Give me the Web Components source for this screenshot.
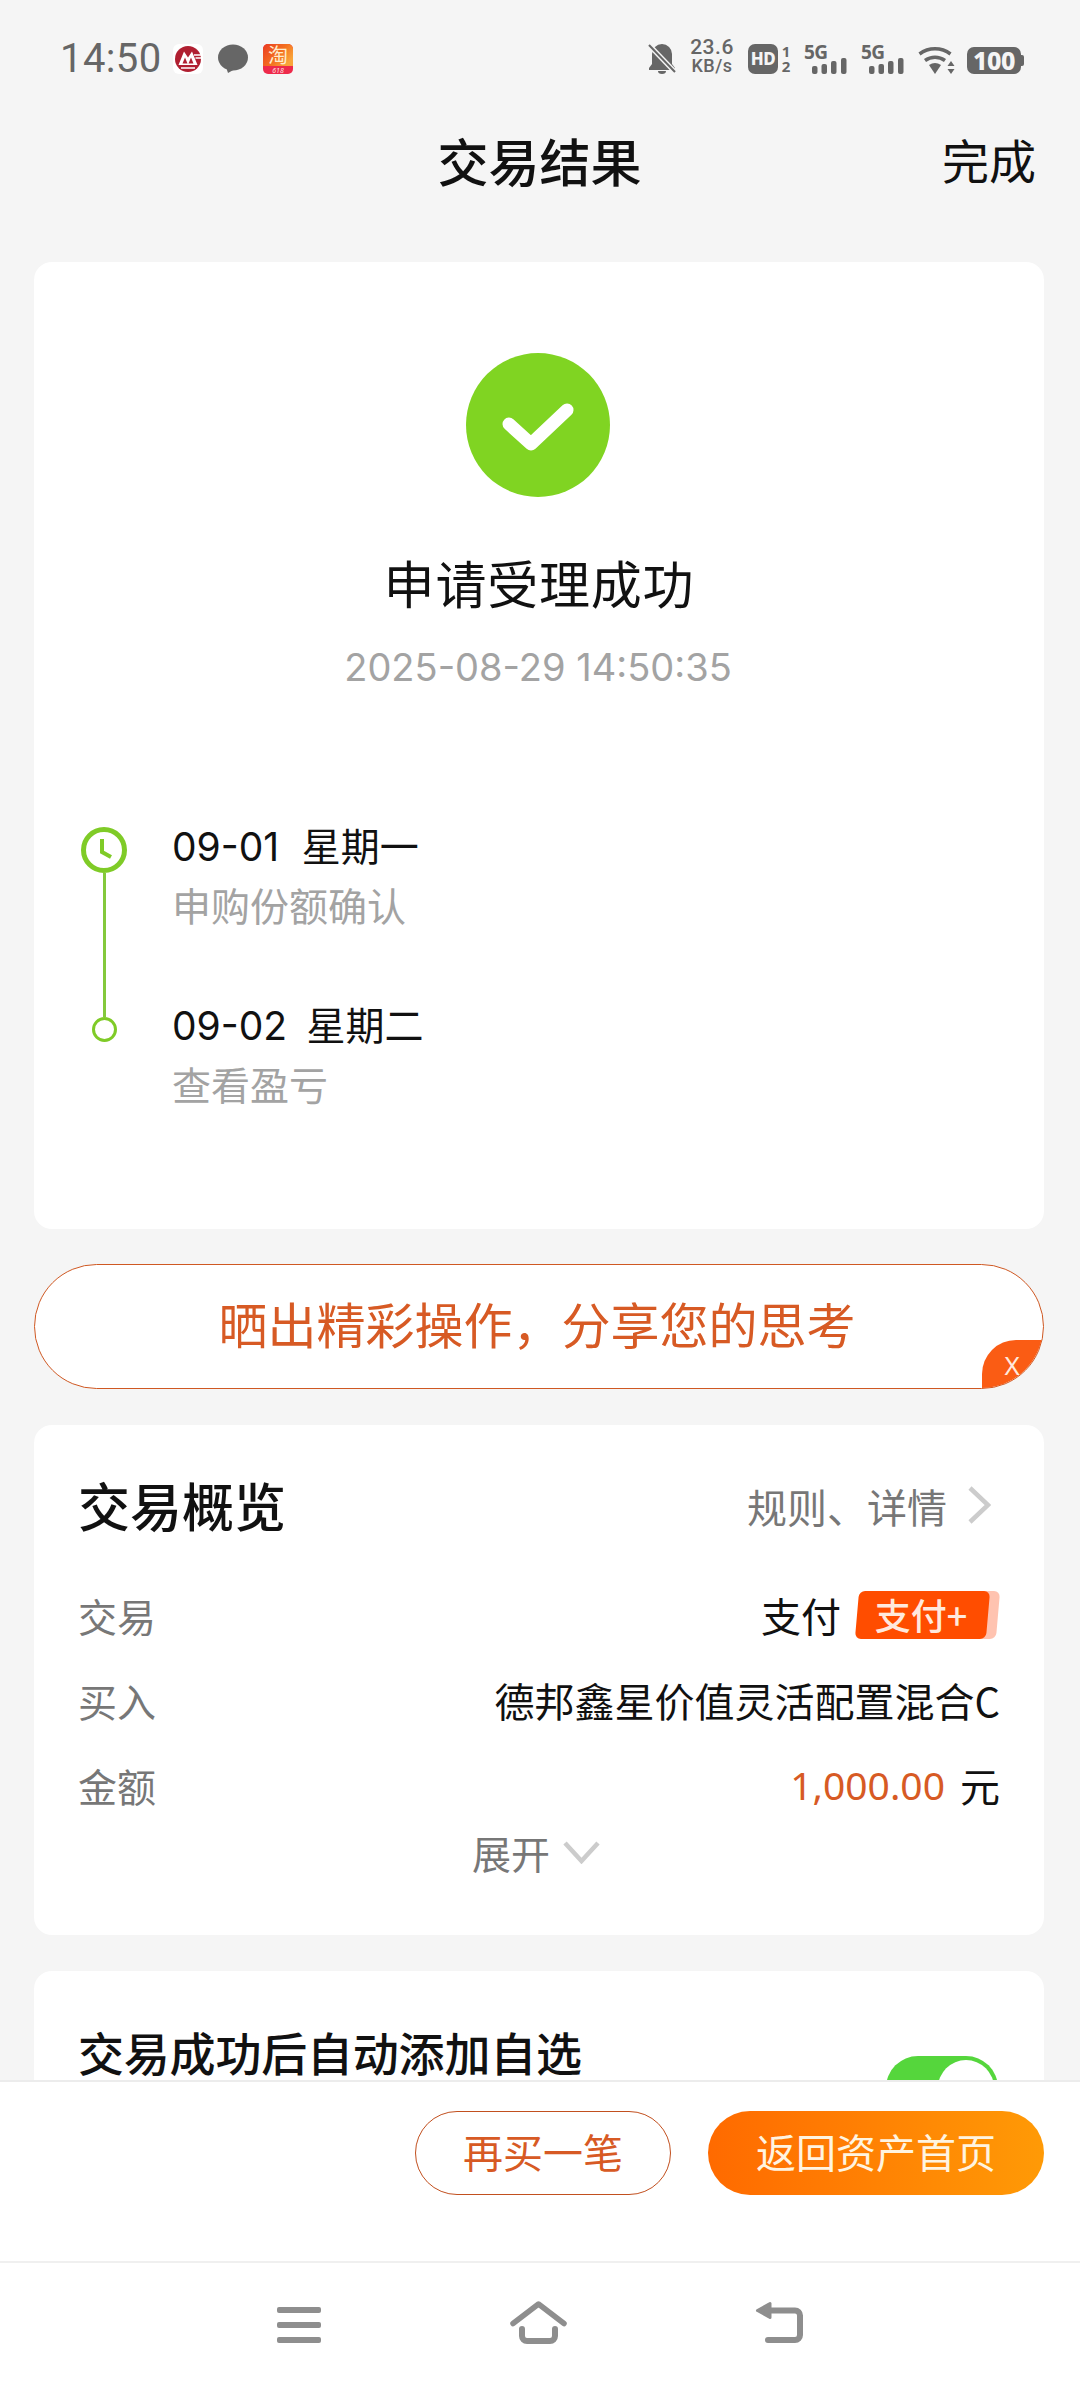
<!DOCTYPE html>
<html lang="zh">
<head>
<meta charset="utf-8">
<title>交易结果</title>
<style>
  html, body { margin: 0; padding: 0; background: #f5f5f5; }
  body { font-family: "Noto Sans CJK SC", "Noto Sans", sans-serif; color: #111; }
</style>
</head>
<body>
<result-page>
  <status-bar slot="top"></status-bar>
  <nav-header slot="top">交易结果<span slot="action">完成</span></nav-header>

  <result-card>
    <span slot="title">申请受理成功</span>
    <span slot="time">2025-08-29 14:50:35</span>
    <timeline-step kind="clock"><span slot="date"><num-text>09-01</num-text>&nbsp; 星期一</span>申购份额确认</timeline-step>
    <timeline-step kind="dot"><span slot="date"><num-text class="tight">09-02</num-text>&nbsp; 星期二</span>查看盈亏</timeline-step>
  </result-card>

  <share-banner>晒出精彩操作&#65292;分享您的思考</share-banner>

  <overview-card>
    <span slot="title">交易概览</span>
    <span slot="link">规则、详情</span>
    <overview-row label="交易">支付<pay-tag>支付+</pay-tag></overview-row>
    <overview-row label="买入">德邦鑫星价值灵活配置混合C</overview-row>
    <overview-row label="金额"><money-text>1,000.00</money-text>元</overview-row>
  </overview-card>

  <auto-card>交易成功后自动添加自选</auto-card>

  <action-bar slot="bottom"></action-bar>
  <system-nav slot="bottom"></system-nav>
</result-page>

<script>
// every element is the same shape: markup + styles in an open shadow root
function component(name, html) {
  const template = document.createElement('template');
  template.innerHTML = html;
  class Element extends HTMLElement {
    constructor() {
      super();
      this.attachShadow({ mode: 'open' });
      this.shadowRoot.appendChild(template.content.cloneNode(true));
    }
  }
  customElements.define(name, Element);
  return Element;
}

component('result-page', `
  <style>
    :host { display: flex; flex-direction: column; width: 1080px; height: 2388px; overflow: hidden; background: #f5f5f5; }
    .main { flex: 1; min-height: 0; overflow: hidden; padding: 0 36px 0 34px; display: flex; flex-direction: column; }
  </style>
  <slot name="top"></slot>
  <div class="main"><slot></slot></div>
  <slot name="bottom"></slot>
`);

component('num-text', `
  <style>
    :host { display: inline-block; margin-right: 5px; font: 400 39px/50px Inter, "Noto Sans", sans-serif; }
    :host(.tight) { margin-right: 2px; }
  </style>
  <slot></slot>
`);

component('status-bar', `
  <style>
    :host { display: flex; flex: none; box-sizing: border-box; height: 115px; padding: 44px 56px 0 60px; color: #666; justify-content: space-between; align-items: flex-start; }
    .side { display: flex; align-items: flex-start; }
    .time { font: 400 40px/30px Roboto, sans-serif; width: 113px; letter-spacing: .4px; }
    svg { display: block; }
    .speed { width: 46px; margin: -5px 13px 0 13px; text-align: center; font: 500 21px/17px Roboto, sans-serif; letter-spacing: .5px; }
    .speed div + div { font-size: 18px; line-height: 17px; margin-top: 1px; }
    .hd { width: 30px; height: 30px; border-radius: 7px; background: #666; color: #f5f5f5; font: 800 17px/30px "Noto Sans", sans-serif; text-align: center; letter-spacing: -.5px; }
    .sim { width: 12px; margin: 0 12px 0 2px; font: 700 15px/15px "Noto Sans", sans-serif; text-align: center; white-space: pre-line; }
    .net { position: relative; width: 43px; height: 30px; margin-right: 14px; }
    .net span { position: absolute; left: 0; top: 0; font: 700 19px/16px "Noto Sans", sans-serif; letter-spacing: -.5px; }
    .net svg { position: absolute; left: 8px; bottom: 0; }
    .wifi { margin: 2px 12px 0 0; }
    .batt { display: flex; align-items: center; margin-top: 3px; }
    .batt div { width: 54px; height: 27px; border-radius: 7px; background: #666; color: #f5f5f5; font: 800 25px/27px "Noto Sans", sans-serif; text-align: center; letter-spacing: -.5px; }
    .batt i { display: block; width: 3px; height: 11px; background: #666; border-radius: 0 2px 2px 0; }
  </style>
  <div class="side">
    <div class="time">14:50</div>
    <svg width="30" height="30" viewBox="0 0 30 30" style="margin-right:15px"><rect width="30" height="30" rx="6" fill="#fff"/><circle cx="15" cy="15" r="13" fill="#b01f31"/><path fill-rule="evenodd" d="M5.500 21 11 7.500l4 6 4-6L24.500 21zM9.500 19.500h5l-2.500-6zM15.500 19.500h5l-2.500-6z" fill="#fff"/><path d="M8 24h14M21 11h8M22.500 14h6.500" stroke="#fff" stroke-width="1.600"/></svg>
    <svg width="30" height="30" viewBox="0 0 30 30" style="margin-right:15px"><ellipse cx="15" cy="13.500" rx="15" ry="13" fill="#666"/><path d="M8 23l2 6 7-4z" fill="#666"/></svg>
    <svg width="30" height="30" viewBox="0 0 30 30" overflow="visible"><defs><linearGradient id="tb" x1="0" y1="0" x2="1" y2=".6"><stop offset="0" stop-color="#ea3a22"/><stop offset=".6" stop-color="#f4701f"/><stop offset="1" stop-color="#f9a53a"/></linearGradient></defs><rect width="30" height="30" rx="5" fill="#ee2a4b"/><path d="M0 22V5a5 5 0 0 1 5-5h20a5 5 0 0 1 5 5v17z" fill="url(#tb)"/><text x="15" y="19" text-anchor="middle" font-size="20" fill="#ffeccd" font-family="Noto Sans CJK SC">淘</text><text x="15" y="28.500" text-anchor="middle" font-size="7" font-style="italic" fill="#ffe0e0" font-family="Noto Sans">618</text></svg>
  </div>
  <div class="side">
    <svg width="28" height="30" viewBox="0 0 28 30"><path d="M4 10a10 10 0 0 1 20 0v10l3 4v2H1v-2l3-4z" fill="#666"/><path d="M10 27a4 3 0 0 0 8 0z" fill="#666"/><path d="M1 1l26 27" stroke="#f5f5f5" stroke-width="5"/><path d="M1 1l26 27" stroke="#666" stroke-width="2"/></svg>
    <div class="speed"><div>23.6</div><div>KB/s</div></div>
    <div class="hd">HD</div>
    <div class="sim">1
2</div>
    <div class="net"><span>5G</span><svg width="35" height="16" viewBox="0 0 35 16"><g fill="#666"><rect y="8" width="5.500" height="8" rx="2"/><rect x="9.500" y="6" width="5.500" height="10" rx="2"/><rect x="19" y="3" width="5.500" height="13" rx="2"/><rect x="29" width="5.500" height="16" rx="2"/></g></svg></div>
    <div class="net"><span>5G</span><svg width="35" height="16" viewBox="0 0 35 16"><g fill="#666"><rect y="8" width="5.500" height="8" rx="2"/><rect x="9.500" y="6" width="5.500" height="10" rx="2"/><rect x="19" y="3" width="5.500" height="13" rx="2"/><rect x="29" width="5.500" height="16" rx="2"/></g></svg></div>
    <svg class="wifi" width="37" height="28" viewBox="0 0 37 28"><g fill="none" stroke="#666" stroke-width="3.500"><path d="M1.500 8a26 26 0 0 1 31 0"/><path d="M7 14.500a17 17 0 0 1 20 0"/></g><path d="M11 19a11 11 0 0 1 12 0l-6 9z" fill="#666"/><path d="M33 15l3.500 5h-7zM33 28l3.500-5h-7z" fill="#666"/></svg>
    <div class="batt"><div>100</div><i></i></div>
  </div>
`);

component('nav-header', `
  <style>
    :host { display: grid; flex: none; grid-template-columns: 1fr auto 1fr; align-items: center; height: 92px; padding: 0 44px 0 34px; font-size: 51px; line-height: 60px; font-weight: 500; color: #111; box-sizing: border-box; }
    .title { grid-column: 2; margin: -3px 0 0 9px; }
    .action { justify-self: end; font-size: 47px; font-weight: 400; margin-top: -4px; }
  </style>
  <div class="title"><slot></slot></div>
  <div class="action"><slot name="action"></slot></div>
`);

component('result-card', `
  <style>
    :host { display: flex; flex: none; flex-direction: column; align-items: center; box-sizing: border-box; height: 967px; margin-top: 55px; padding-top: 91px; background: #fff; border-radius: 18px; }
    svg { display: block; margin-right: 3px; }
    .title { margin-top: 55px; font-size: 51px; line-height: 60px; letter-spacing: .8px; color: #111; }
    .time { margin: 30px 2px 0 0; font: 400 38px/50px Inter, "Noto Sans", sans-serif; color: #a3a3a3; }
    .steps { align-self: stretch; margin-top: 130px; padding-left: 46px; display: flex; flex-direction: column; }
  </style>
  <svg width="144" height="144" viewBox="0 0 144 144"><circle cx="72" cy="72" r="72" fill="#80d422"/><path d="M43 71l22 20 36-34" fill="none" stroke="#fff" stroke-width="13" stroke-linecap="round" stroke-linejoin="round"/></svg>
  <div class="title"><slot name="title"></slot></div>
  <div class="time"><slot name="time"></slot></div>
  <div class="steps"><slot></slot></div>
`);

class TimelineStep extends HTMLElement {
  constructor() {
    super();
    const clock = this.getAttribute('kind') === 'clock';
    const marker = clock
      ? `<svg class="clock" width="46" height="46" viewBox="0 0 46 46"><circle cx="23" cy="23" r="20.500" fill="#fff" stroke="#7fcb27" stroke-width="5"/><path d="M21 12v13l9 5" fill="none" stroke="#7fcb27" stroke-width="4"/></svg><i class="line"></i>`
      : `<i class="stem"></i><b class="dot"></b>`;
    this.attachShadow({ mode: 'open' }).innerHTML = `
      <style>
        :host { display: grid; flex: none; grid-template-columns: 48px 1fr; column-gap: 44px; height: ${clock ? 179 : 109}px; }
        .marker { display: flex; flex-direction: column; align-items: center; }
        .clock { margin-top: 5px; flex: none; }
        .line { flex: 1; width: 3px; background: #84c93c; }
        .stem { height: 16px; width: 3px; background: #84c93c; }
        .dot { box-sizing: border-box; width: 25px; height: 25px; border: 3.500px solid #7fcb27; border-radius: 50%; }
        .date { font-size: 39px; line-height: 50px; color: #111; margin-top: -3px; }
        .sub { margin-top: 7px; font-size: 39px; line-height: 50px; color: #a3a3a3; }
      </style>
      <div class="marker">${marker}</div>
      <div><div class="date"><slot name="date"></slot></div><div class="sub"><slot></slot></div></div>`;
  }
}
customElements.define('timeline-step', TimelineStep);

component('share-banner', `
  <style>
    :host { display: flex; flex: none; position: relative; overflow: hidden; box-sizing: border-box; height: 125px; margin-top: 35px; padding: 0 4px 8px 0; align-items: center; justify-content: center; background: #fff; border: 1.500px solid #cf5822; border-radius: 63px; font-size: 49px; line-height: 60px; color: #d75a24; }
    .close { position: absolute; right: -2px; bottom: -2px; width: 63px; height: 50px; background: #fa5c14; border-top-left-radius: 34px; color: #ffe9dd; font: 400 26px/50px "Noto Sans", sans-serif; text-align: center; padding-right: 3px; box-sizing: border-box; }
  </style>
  <slot></slot>
  <div class="close">X</div>
`);

component('overview-card', `
  <style>
    :host { display: block; flex: none; box-sizing: border-box; height: 510px; margin-top: 36px; padding: 50px 44px 0 44px; background: #fff; border-radius: 18px; }
    .head { display: flex; align-items: center; height: 60px; }
    .title { flex: 1; font-size: 52px; line-height: 60px; font-weight: 500; color: #111; }
    .link { font-size: 40px; line-height: 50px; color: #777; margin-top: 1px; }
    .head svg { margin: 0 9px 0 20px; }
    .rows { margin-top: 37px; }
    .more { display: flex; justify-content: center; align-items: center; gap: 13px; margin-top: 0; font-size: 39px; line-height: 50px; color: #777; padding-right: 6px; }
  </style>
  <div class="head">
    <div class="title"><slot name="title"></slot></div>
    <div class="link"><slot name="link"></slot></div>
    <svg width="24" height="38" viewBox="0 0 24 38"><path d="M3 2l18 17L3 36" fill="none" stroke="#ccc" stroke-width="4.500"/></svg>
  </div>
  <div class="rows"><slot></slot></div>
  <div class="more">展开<svg width="37" height="23" viewBox="0 0 37 23"><path d="M2 2l16.500 18L35 2" fill="none" stroke="#ccc" stroke-width="4.500"/></svg></div>
`);

class OverviewRow extends HTMLElement {
  constructor() {
    super();
    this.attachShadow({ mode: 'open' }).innerHTML = `
      <style>
        :host { display: flex; justify-content: space-between; align-items: center; height: 85px; font-size: 40px; line-height: 50px; color: #111; }
        .label { color: #777; font-size: 39px; }
        .value { display: flex; align-items: center; }
      </style>
      <div class="label">${this.getAttribute('label')}</div>
      <div class="value"><slot></slot></div>`;
  }
}
customElements.define('overview-row', OverviewRow);

component('pay-tag', `
  <style>
    :host { display: block; position: relative; box-sizing: border-box; width: 131px; height: 48px; margin: 0 12px 0 16px; padding-right: 3px; text-align: center; font-size: 36px; font-weight: 500; line-height: 46px; color: #ffe9dd; }
    .back, .front { position: absolute; top: 0; bottom: 0; transform: skewX(-5deg); border-radius: 6px; }
    .back { left: 10px; right: -10px; background: #ffc3b0; }
    .front { left: 0; right: 0; background: #ff4d00; }
    .text { position: relative; }
  </style>
  <div class="back"></div><div class="front"></div><div class="text"><slot></slot></div>
`);

component('money-text', `
  <style>
    :host { display: inline-block; margin-right: 15px; font: 400 39px/50px "Noto Sans", sans-serif; color: #d75a24; }
  </style>
  <slot></slot>
`);

component('auto-card', `
  <style>
    :host { display: flex; flex: none; justify-content: space-between; box-sizing: border-box; height: 300px; margin-top: 36px; padding: 51px 46px 0 44px; background: #fff; border-radius: 18px; font-size: 46px; line-height: 58px; font-weight: 500; letter-spacing: -.2px; color: #111; }
    .toggle { position: relative; width: 112px; height: 64px; margin-top: 34px; border-radius: 32px; background: #55d63c; }
    .toggle i { position: absolute; right: 4px; top: 4px; width: 56px; height: 56px; border-radius: 50%; background: #fff; }
  </style>
  <div><slot></slot></div>
  <div class="toggle"><i></i></div>
`);

component('pill-button', `
  <style>
    :host { display: flex; align-items: center; justify-content: center; box-sizing: border-box; height: 84px; padding-bottom: 5px; border-radius: 42px; font-size: 40px; line-height: 50px; }
    :host([outline]) { width: 256px; background: #fff; border: 1.500px solid #c2501f; color: #d75a24; }
    :host([solid]) { width: 336px; background: linear-gradient(90deg, #ff6a00, #ff9a06); color: #fff4e0; }
  </style>
  <slot></slot>
`);

component('action-bar', `
  <style>
    :host { display: flex; flex: none; justify-content: flex-end; gap: 37px; box-sizing: border-box; height: 181px; padding: 29px 36px 0 0; background: #fff; border-top: 2px solid #ececec; }
  </style>
  <pill-button outline>再买一笔</pill-button>
  <pill-button solid>返回资产首页</pill-button>
`);

component('system-nav', `
  <style>
    :host { display: flex; flex: none; justify-content: center; align-items: flex-start; box-sizing: border-box; height: 127px; padding-top: 38px; background: #fff; border-top: 2px solid #f0f0f0; }
    svg { display: block; }
    .menu { margin: 6px 0 0 0; }
    .home { margin: 0 0 0 189px; }
    .back { margin: 0 0 0 188px; }
  </style>
  <svg class="menu" width="44" height="36" viewBox="0 0 44 36"><g fill="#8e8e8e"><rect width="44" height="6" rx="2"/><rect y="15" width="44" height="6" rx="2"/><rect y="30" width="44" height="6" rx="2"/></g></svg>
  <svg class="home" width="57" height="43" viewBox="0 0 57 43"><path d="M3 22.500 28.500 3 54 22.500" fill="none" stroke="#8e8e8e" stroke-width="5.500" stroke-linejoin="round" stroke-linecap="round"/><path d="M12 28v7a5 5 0 0 0 5 5h23a5 5 0 0 0 5-5v-7" fill="none" stroke="#8e8e8e" stroke-width="6" stroke-linecap="round"/></svg>
  <svg class="back" width="48" height="42" viewBox="0 0 48 42"><path d="M15 2.500v14L2.500 9.500z" fill="#8e8e8e" stroke="#8e8e8e" stroke-width="3" stroke-linejoin="round"/><path d="M12 9.500h28a5 5 0 0 1 5 5V34a5 5 0 0 1-5 5H13" fill="none" stroke="#8e8e8e" stroke-width="6" stroke-linecap="round"/></svg>
`);
</script>
</body>
</html>
